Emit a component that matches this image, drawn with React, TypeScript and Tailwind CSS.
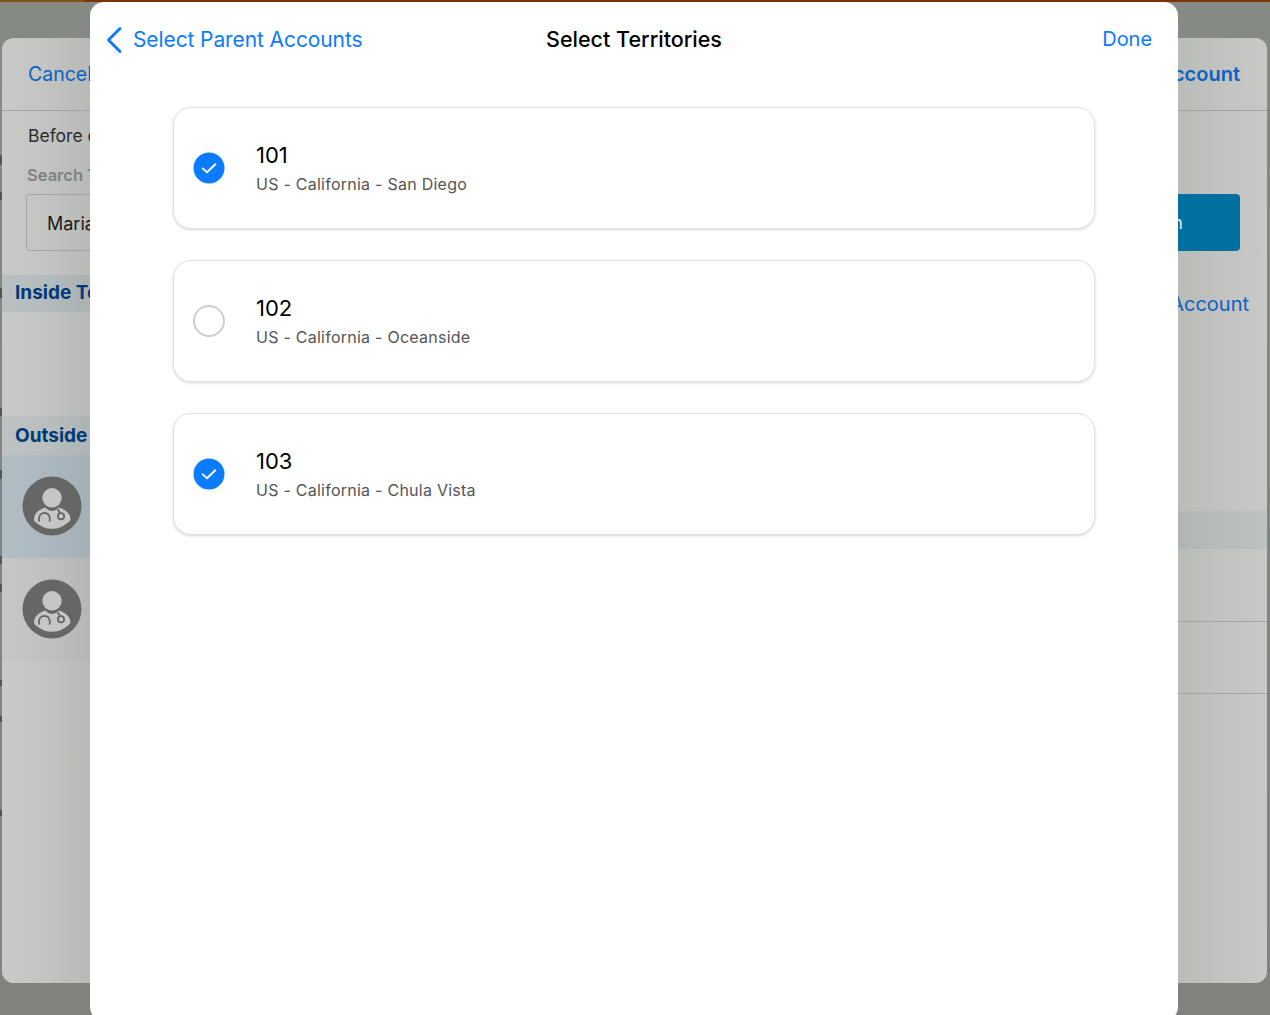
import React from "react";

const font = { fontFamily: 'Inter, "Noto Sans", "Liberation Sans", sans-serif' };

const edgeMarks = [
  [155, 10],
  [192, 8],
  [288, 10],
  [408, 8],
  [470, 9],
  [556, 8],
  [584, 8],
  [680, 6],
  [716, 6],
  [810, 6],
];

function DoctorAvatar() {
  return (
    <svg width="60" height="60" viewBox="0 0 60 60" className="shrink-0">
      <circle cx="30" cy="30" r="29.5" fill="#656764" />
      <circle cx="30" cy="21.8" r="9.7" fill="#c6c7c4" />
      <path d="M23.5 31.5 C16.5 33.5 12 38 12 43 C12 44.5 12.6 45.4 13.6 46.2 C18.5 50.5 24 52.8 30 52.8 C36 52.8 41.5 50.5 46.4 46.2 C47.4 45.4 48.5 44.5 48.5 43 C48.5 38 44 33.5 36.5 31.5 C34.5 34 32.5 34.8 30 34.8 C27.5 34.8 25.5 34 23.5 31.5 Z" fill="#c6c7c4" />
      <path d="M17.2 45 C16.2 40.5 18.4 37 22.4 36.8 C26.6 36.8 28.6 40.5 27.6 45" fill="none" stroke="#656764" strokeWidth="1.7" strokeLinecap="round" />
      <path d="M35.5 33 L38 37" fill="none" stroke="#656764" strokeWidth="1.7" />
      <circle cx="39" cy="40.3" r="3.1" fill="none" stroke="#656764" strokeWidth="1.8" />
    </svg>
  );
}

function TerritoryCard({ code, place, checked }: { code: string; place: string; checked: boolean }) {
  return (
    <div className="flex h-[122px] items-center rounded-[18px] border border-[#e2e2e2] bg-white pl-[19px] shadow-[0_1px_3px_rgba(0,0,0,0.16)]">
      {checked ? (
        <svg width="32" height="32" viewBox="0 0 32 32" className="shrink-0">
          <circle cx="16" cy="16" r="15.5" fill="#0b7bff" />
          <path d="M9.7 16.4 L14 20.3 L22.3 12.3" fill="none" stroke="#fff" strokeWidth="1.9" strokeLinecap="round" strokeLinejoin="round" />
        </svg>
      ) : (
        <div className="h-[32px] w-[32px] shrink-0 rounded-full border-2 border-[#cdcdcd]" />
      )}
      <div className="ml-[31px] mt-[1px] flex flex-col">
        <div className="text-[22px] leading-[28px] text-black">{code}</div>
        <div className="mt-[3px] text-[16px] leading-[24px] tracking-[0.25px] text-[#555555]">{place}</div>
      </div>
    </div>
  );
}

export default function App() {
  return (
    <div
      style={font}
      className="relative h-[1015px] w-[1270px] overflow-hidden bg-gradient-to-b from-[#868a85] to-[#7f837b]"
    >
      <div className="flex h-[2px]">
        <div className="w-[85px] bg-[#7d5212]" />
        <div className="flex-1 bg-[#7a3208]" />
      </div>

      <div className="ml-[2px] mt-[36px] grid h-[945px] w-[1265px] grid-cols-[1fr_1fr] overflow-hidden rounded-[12px] bg-[#c5c6c3]">
        {/* left side of the sheet underneath */}
        <div className="flex flex-col bg-[linear-gradient(90deg,#c9cac7_0px,#c4c5c2_40px,#b8bab6_88px)]">
          <div className="flex h-[73px] items-center border-b border-[#a0a2a0] pl-[26px] pt-[2px] text-[19.5px] text-[#0a62c4]">
            Cancel
          </div>
          <div className="mt-[13px] pl-[26px] text-[17.5px] leading-[24px] text-[#2c2c2c]">Before continuing</div>
          <div className="mt-[15px] pl-[25px] text-[16.5px] font-semibold leading-[24px] text-[#7f817f]">Search Territory</div>
          <div className="ml-[24px] mt-[7px] flex h-[57px] items-center rounded-[4px] border border-[#a3a5a3] pl-[20px] pt-[2px] text-[18px] text-[#1a1a1a]">
            Maria
          </div>
          <div className="mt-[24px] flex h-[37px] items-center bg-[#2f6f8f]/[0.10] pl-[13px] text-[19px] font-bold text-[#003a78]">
            Inside Territory
          </div>
          <div className="h-[104px]" />
          <div className="flex h-[39px] items-center bg-[#2f6f8f]/[0.07] pl-[13px] pt-[2px] text-[19px] font-bold text-[#003a78]">
            Outside Territory
          </div>
          <div className="flex h-[103px] items-center bg-[#3a7ab8]/[0.16] pb-[2px] pl-[20px]">
            <DoctorAvatar />
          </div>
          <div className="flex h-[103px] items-center bg-black/[0.01] pb-[2px] pl-[20px]">
            <DoctorAvatar />
          </div>
        </div>

        {/* right side of the sheet underneath */}
        <div className="flex flex-col bg-[linear-gradient(270deg,#c8c8c7_0px,#c2c3c0_45px,#babcb8_88px)]">
          <div className="flex h-[73px] items-center justify-end border-b border-[#a0a2a0] pr-[27px] text-[20px] font-semibold text-[#0a62c4]">
            New Account
          </div>
          <div className="mr-[27px] mt-[83px] flex h-[57px] items-center justify-end self-stretch rounded-[4px] bg-[#00709f] pr-[57px] text-[18px] text-[#dfe6e8]">
            Search
          </div>
          <div className="mr-[18px] mt-[39px] text-right text-[20px] leading-[28px] text-[#0a62c4]">Add New Account</div>
          <div className="mt-[193px] h-[38px] bg-[#2f6f8f]/[0.08]" />
          <div className="h-[73px] border-b border-[#a3a5a3]" />
          <div className="h-[72px] border-b border-[#a3a5a3]" />
        </div>
      </div>

      {/* remnants of the page behind, peeking out at the left edge */}
      {edgeMarks.map(([top, height]) => (
        <div
          key={top}
          className="absolute left-0 w-[2px] bg-[#3f413f]/70"
          style={{ top, height }}
        />
      ))}

      {/* foreground modal */}
      <div className="absolute left-[90px] top-[2px] h-[1019px] w-[1088px] rounded-[14px] bg-white">
        <div className="relative flex h-[73px] items-center justify-between pl-[15px] pr-[26px] pt-[3px]">
          <div className="flex items-center text-[#0b7bff]">
            <svg width="18" height="28" viewBox="0 0 18 28" className="shrink-0">
              <path d="M15 2.5 L3.5 14 L15 25.5" fill="none" stroke="#0b7bff" strokeWidth="3" strokeLinecap="round" strokeLinejoin="round" />
            </svg>
            <span className="ml-[10px] text-[21px] tracking-[-0.1px]">Select Parent Accounts</span>
          </div>
          <div className="absolute inset-x-0 mt-[-2px] text-center text-[21.5px] font-medium text-black">Select Territories</div>
          <div className="mt-[-2px] text-[20px] tracking-[-0.05px] text-[#0b7bff]">Done</div>
        </div>
        <div className="flex flex-col gap-[31px] px-[83px] pt-[32px]">
          <TerritoryCard code="101" place="US - California - San Diego" checked />
          <TerritoryCard code="102" place="US - California - Oceanside" checked={false} />
          <TerritoryCard code="103" place="US - California - Chula Vista" checked />
        </div>
      </div>
    </div>
  );
}
